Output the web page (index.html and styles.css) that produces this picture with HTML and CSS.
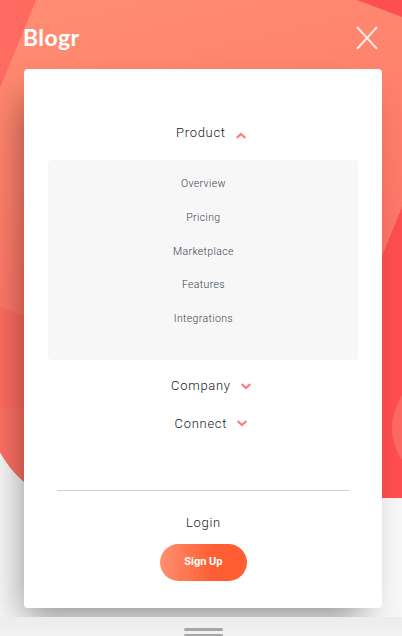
FILE: index.html
```html
<!DOCTYPE html>
<html lang="en">
<head>
<meta charset="utf-8">
<meta name="viewport" content="width=device-width, initial-scale=1">
<title>Blogr</title>
<link rel="stylesheet" href="styles.css">
</head>
<body>
<div class="page">
  <svg class="backdrop" viewBox="0 0 402 617" aria-hidden="true">
    <defs>
      <linearGradient id="coral" gradientUnits="userSpaceOnUse" x1="120" y1="0" x2="190" y2="300">
        <stop offset="0" stop-color="#ff8c70"/><stop offset="1" stop-color="#ff7467"/>
      </linearGradient>
      <linearGradient id="red" x1="0" y1="0" x2="1" y2="0">
        <stop offset="0" stop-color="#ff6c61"/><stop offset=".8" stop-color="#ff4e50"/>
      </linearGradient>
    </defs>
    <path fill="url(#red)" d="M0 0H402V498H70Q45 498 24 482Q9 469 0 452Z"/>
    <path fill="url(#coral)" d="M36 0H357L402 17V207L382 256L340 350L150 363L25 316L0 307V88Z"/>
    <path fill="#ff7568" fill-opacity=".55" d="M0 407H150V498H70Q45 498 24 482Q9 469 0 452Z"/>
    <path fill="#ff6965" d="M402 394L396 408Q388 427 395 446Q398 454 402 460Z"/>
  </svg>
  <header class="header">
    <a class="logo">Blogr</a>
    <svg class="close" width="22" height="24" viewBox="0 0 22 24" aria-hidden="true"><path d="M1 1L21 23M21 1L1 23"/></svg>
  </header>
  <nav class="menu">
    <div class="item product"><span class="label">Product</span><svg class="chevron" width="10" height="7" viewBox="0 0 10 7"><path d="M.7 6L5 2L9.300 6"/></svg></div>
    <ul class="submenu">
      <li>Overview</li>
      <li>Pricing</li>
      <li>Marketplace</li>
      <li>Features</li>
      <li>Integrations</li>
    </ul>
    <div class="item company"><span class="label">Company</span><svg class="chevron" width="10" height="7" viewBox="0 0 10 7"><path d="M.7 1L5 5L9.300 1"/></svg></div>
    <div class="item connect"><span class="label">Connect</span><svg class="chevron" width="10" height="7" viewBox="0 0 10 7"><path d="M.7 1L5 5L9.300 1"/></svg></div>
    <div class="divider"></div>
    <a class="login">Login</a>
    <a class="signup">Sign Up</a>
  </nav>
</div>
<footer class="handle"><i></i><i></i></footer>
</body>
</html>
```

FILE: styles.css
```css
* { box-sizing: border-box; }
body { margin: 0; width: 402px; height: 636px; overflow: hidden; background: #efefef; font-family: Roboto, "Open Sans", sans-serif; }
.page { position: relative; height: 617px; overflow: hidden; background: #f7f7f7; }
.backdrop { position: absolute; inset: 0; width: 402px; height: 617px; }
.header { position: relative; height: 69px; padding: 7px 24px 0 23px; display: flex; justify-content: space-between; align-items: center; }
.logo { margin-top: -2px; color: #fff; font: 700 23px/30px Lato, sans-serif; letter-spacing: .4px; }
.close { fill: none; stroke: #ffe8e2; stroke-width: 2; }
.menu { position: relative; width: 358px; height: 539px; margin-left: 24.400px; padding: 52px 24px 0; display: flex; flex-direction: column; align-items: center; background: #fff; border-radius: 4px; box-shadow: -10px 20px 34px -10px rgba(0, 0, 0, .42); }
.item { display: flex; align-items: center; height: 24px; gap: 10px; color: #15191f; font-size: 13px; font-weight: 300; letter-spacing: .7px; }
.label { padding-bottom: 2px; }
.product { margin-left: 15px; }
.product .chevron { margin-top: 5px; }
.chevron { fill: none; stroke: #ff7b86; stroke-width: 2.300; }
.submenu { width: 310px; height: 200px; margin: 15px 0 0; padding: 7px 0 0; list-style: none; background: #f7f7f7; border-radius: 4px; text-align: center; color: #38424f; font-size: 10.500px; font-weight: 300; letter-spacing: .35px; }
.submenu li { height: 33.800px; line-height: 34px; }
.company { margin: 14px 0 0 15px; }
.connect { margin: 14px 0 0 15px; }
.connect .chevron { margin-top: -1px; }
.divider { width: 292px; height: 1px; margin-top: 54px; background: #d2d2d2; }
.login { margin-top: 21px; color: #15191f; font-size: 13px; font-weight: 300; line-height: 22px; letter-spacing: .7px; }
.signup { width: 87px; height: 37px; margin-top: 9.500px; border-radius: 19px; background: linear-gradient(90deg, #ff8f71, #ff5e33 60%); color: #fff; font-size: 11px; font-weight: 700; line-height: 36px; text-align: center; }
.handle { height: 19px; padding: 11px 0 0 5px; display: flex; flex-direction: column; align-items: center; gap: 3px; background: linear-gradient(#ececec, #f2f2f2); }
.handle i { width: 39px; height: 3px; flex: none; border-radius: 2px; background: #a6a6a6; }
```
